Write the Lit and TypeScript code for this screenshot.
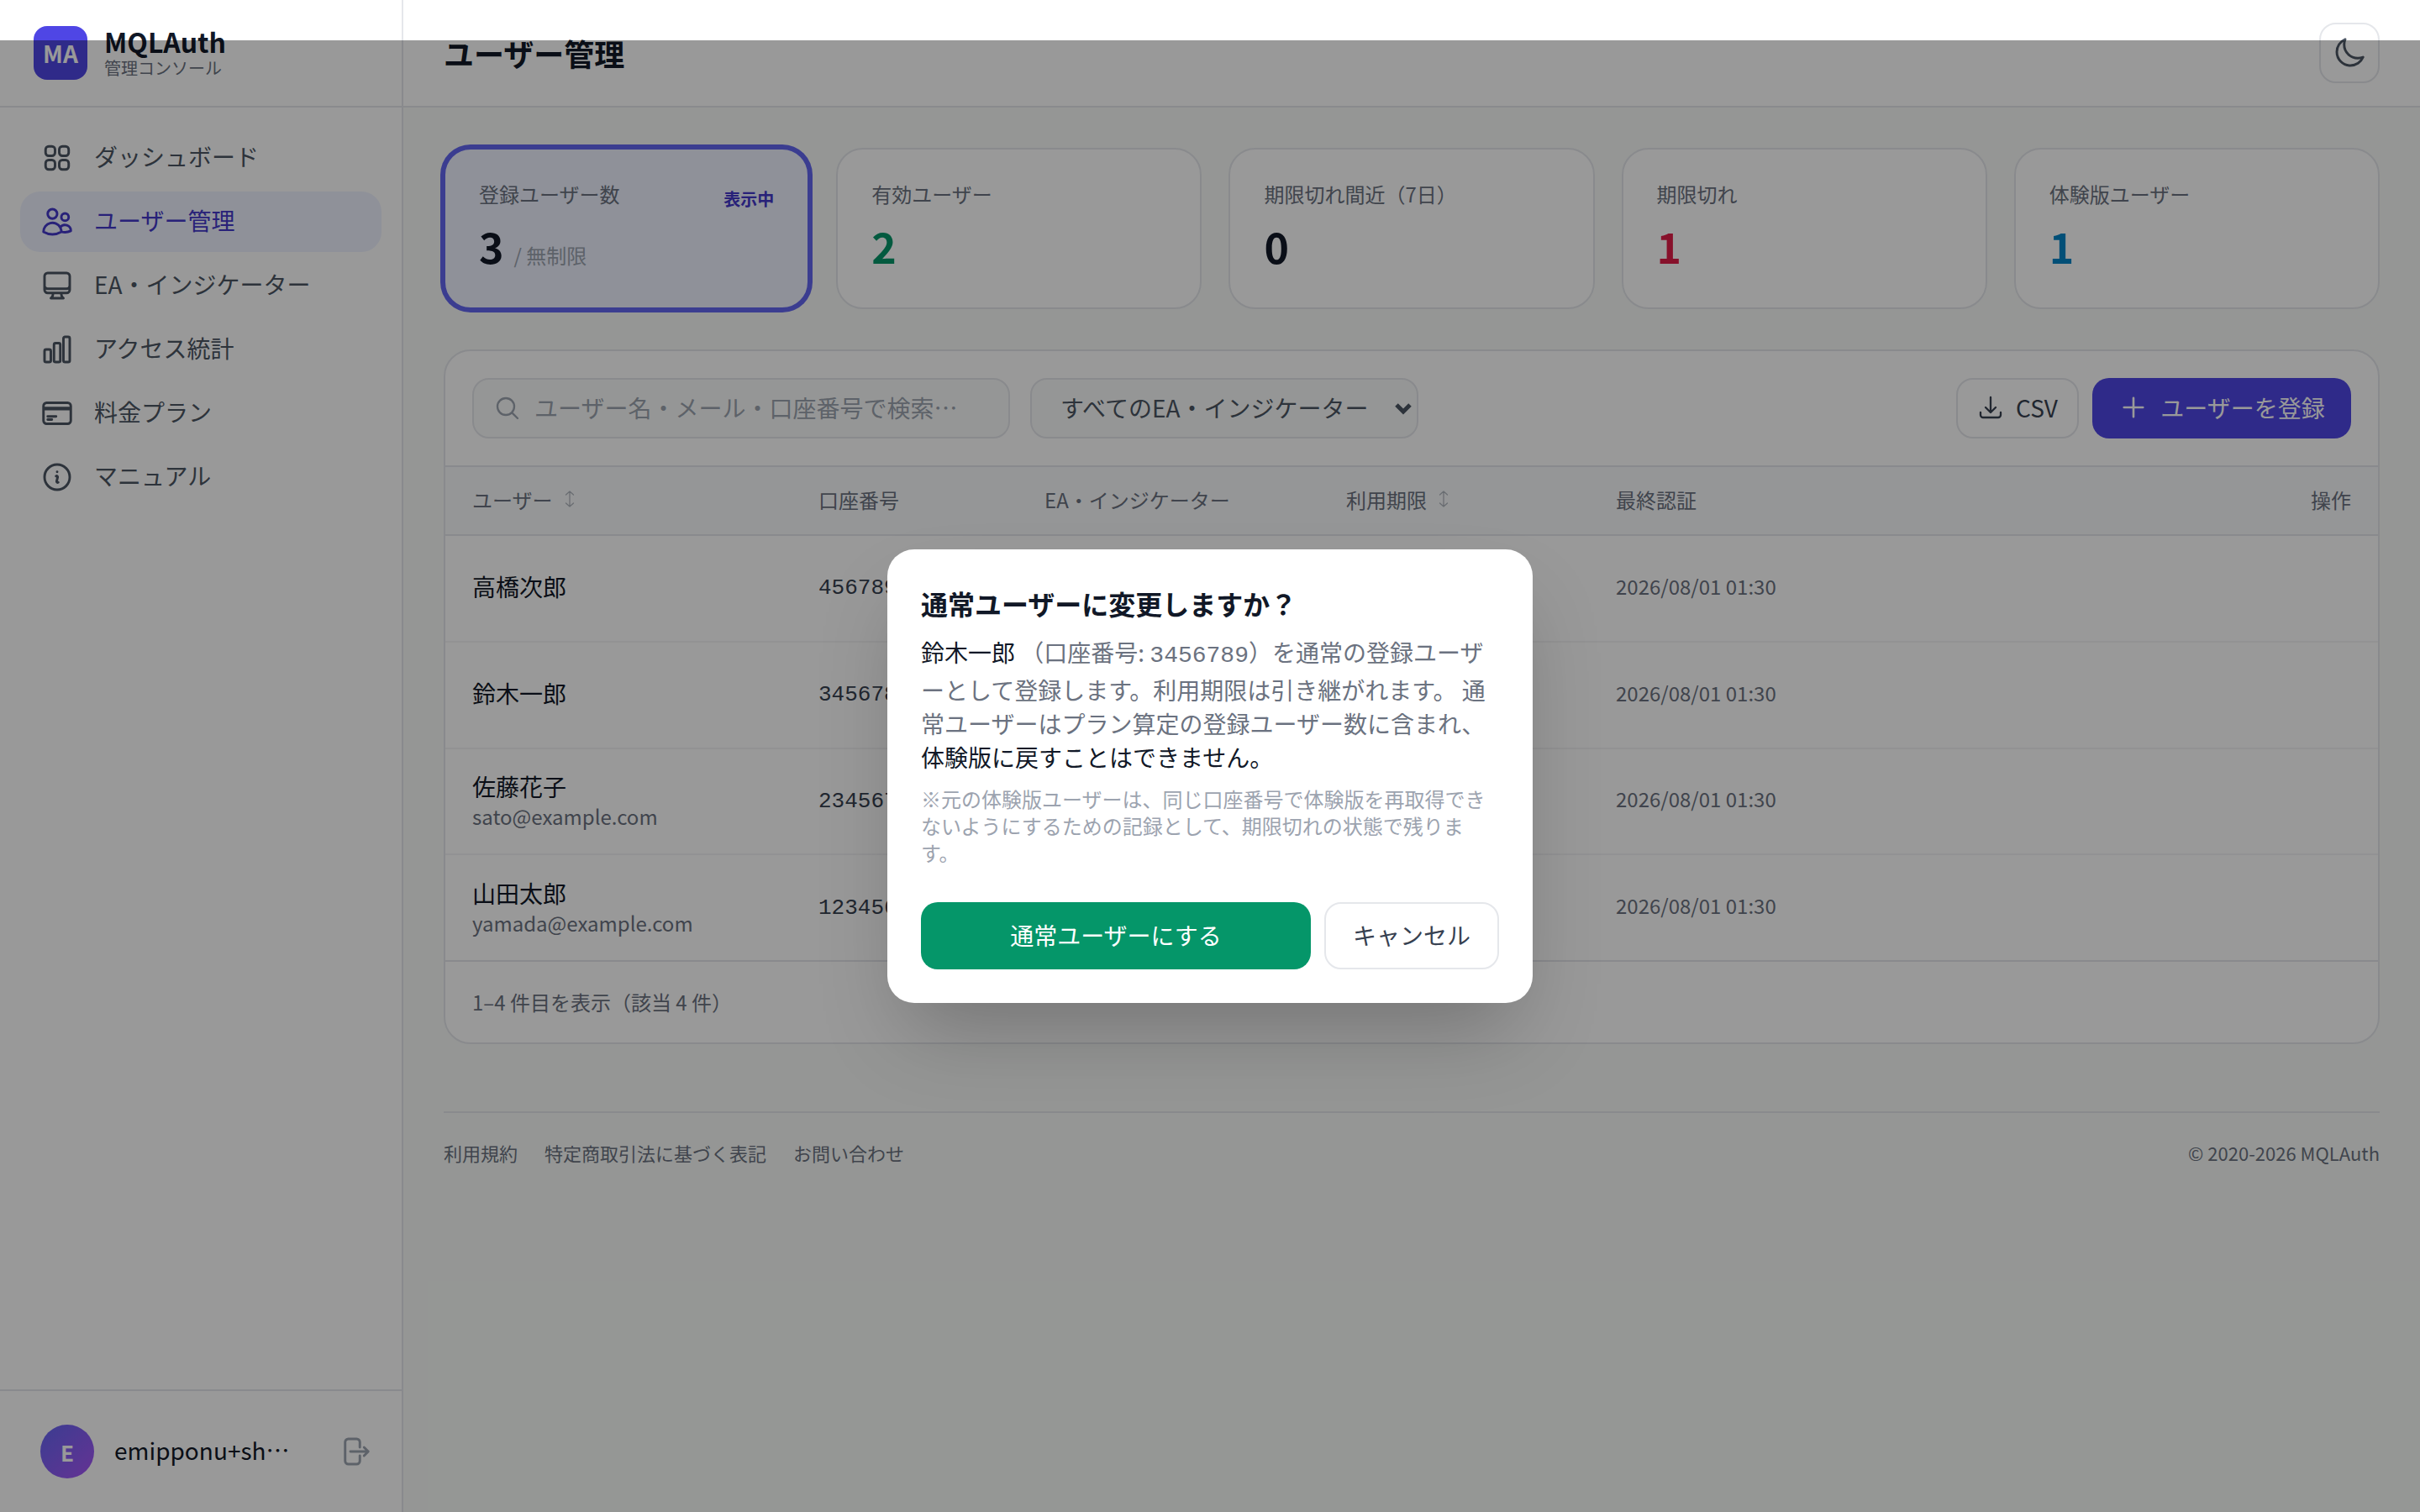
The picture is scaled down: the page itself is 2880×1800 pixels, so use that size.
import { LitElement, css, html, svg } from "lit";
import { customElement } from "lit/decorators.js";

const ICONS: Record<string, string> = {
  grid: "M3.75 6A2.25 2.25 0 0 1 6 3.75h2.25A2.25 2.25 0 0 1 10.5 6v2.25a2.25 2.25 0 0 1-2.25 2.25H6a2.25 2.25 0 0 1-2.25-2.25V6ZM3.75 15.75A2.25 2.25 0 0 1 6 13.5h2.25a2.25 2.25 0 0 1 2.25 2.25V18a2.25 2.25 0 0 1-2.25 2.25H6A2.25 2.25 0 0 1 3.75 18v-2.25ZM13.5 6a2.25 2.25 0 0 1 2.25-2.25H18A2.25 2.25 0 0 1 20.25 6v2.25A2.25 2.25 0 0 1 18 10.5h-2.25a2.25 2.25 0 0 1-2.25-2.25V6ZM13.5 15.75a2.25 2.25 0 0 1 2.25-2.25H18a2.25 2.25 0 0 1 2.25 2.25V18A2.25 2.25 0 0 1 18 20.25h-2.25A2.25 2.25 0 0 1 13.5 18v-2.25Z",
  users: "M15 19.128a9.38 9.38 0 0 0 2.625.372 9.337 9.337 0 0 0 4.121-.952 4.125 4.125 0 0 0-7.533-2.493M15 19.128v-.003c0-1.113-.285-2.16-.786-3.07M15 19.128v.106A12.318 12.318 0 0 1 8.624 21c-2.331 0-4.512-.645-6.374-1.766l-.001-.109a6.375 6.375 0 0 1 11.964-3.07M12 6.375a3.375 3.375 0 1 1-6.75 0 3.375 3.375 0 0 1 6.75 0Zm8.25 2.25a2.625 2.625 0 1 1-5.25 0 2.625 2.625 0 0 1 5.25 0Z",
  desktop: "M9 17.25v1.007a3 3 0 0 1-.879 2.122L7.5 21h9l-.621-.621A3 3 0 0 1 15 18.257V17.25m6-12V15a2.25 2.25 0 0 1-2.25 2.25H5.25A2.25 2.25 0 0 1 3 15V5.25m18 0A2.25 2.25 0 0 0 18.75 3H5.25A2.25 2.25 0 0 0 3 5.25m18 0V12a2.25 2.25 0 0 1-2.25 2.25H5.25A2.25 2.25 0 0 1 3 12V5.25",
  chart: "M3 13.125C3 12.504 3.504 12 4.125 12h2.25c.621 0 1.125.504 1.125 1.125v6.75C7.5 20.496 6.996 21 6.375 21h-2.25A1.125 1.125 0 0 1 3 19.875v-6.75ZM9.75 8.625c0-.621.504-1.125 1.125-1.125h2.25c.621 0 1.125.504 1.125 1.125v11.25c0 .621-.504 1.125-1.125 1.125h-2.25a1.125 1.125 0 0 1-1.125-1.125V8.625ZM16.5 4.125c0-.621.504-1.125 1.125-1.125h2.25C20.496 3 21 3.504 21 4.125v15.75c0 .621-.504 1.125-1.125 1.125h-2.25a1.125 1.125 0 0 1-1.125-1.125V4.125Z",
  card: "M2.25 8.25h19.5M2.25 9h19.5M5.25 14.25h6M5.25 16.5h3M4.5 19.5h15a2.25 2.25 0 0 0 2.25-2.25V6.75A2.25 2.25 0 0 0 19.5 4.5h-15a2.25 2.25 0 0 0-2.25 2.25v10.5A2.25 2.25 0 0 0 4.5 19.5Z",
  info: "m11.25 11.25.041-.02a.75.75 0 0 1 1.063.852l-.708 2.836a.75.75 0 0 0 1.063.853l.041-.021M21 12a9 9 0 1 1-18 0 9 9 0 0 1 18 0Zm-9-3.75h.008v.008H12V8.25Z",
  moon: "M21.752 15.002A9.72 9.72 0 0 1 18 15.75c-5.385 0-9.75-4.365-9.75-9.75 0-1.33.266-2.597.748-3.752A9.753 9.753 0 0 0 3 11.25C3 16.635 7.365 21 12.75 21a9.753 9.753 0 0 0 9.002-5.998Z",
  logout: "M15.75 9V5.25A2.25 2.25 0 0 0 13.5 3h-6a2.25 2.25 0 0 0-2.25 2.25v13.5A2.25 2.25 0 0 0 7.5 21h6a2.25 2.25 0 0 0 2.25-2.25V15m3 0 3-3m0 0-3-3m3 3H9",
  search: "m21 21-5.197-5.197m0 0A7.5 7.5 0 1 0 5.196 5.196a7.5 7.5 0 0 0 10.607 10.607Z",
  download: "M3 16.5v2.25A2.25 2.25 0 0 0 5.25 21h13.5A2.25 2.25 0 0 0 21 18.75V16.5M16.5 12 12 16.5m0 0L7.5 12m4.5 4.5V3",
  plus: "M12 4.5v15m7.5-7.5h-15",
  sort: "M7.5 7 12 3l4.5 4M12 3v18M7.5 17l4.5 4 4.5-4",
};

function icon(name: string, cls = "") {
  return html`<svg class="icon ${cls}" viewBox="0 0 24 24" fill="none" stroke="currentColor">
    ${svg`<path d=${ICONS[name]} stroke-linecap="round" stroke-linejoin="round"></path>`}
  </svg>`;
}

const NAV = [
  { icon: "grid", label: "ダッシュボード" },
  { icon: "users", label: "ユーザー管理", active: true },
  { icon: "desktop", label: "EA・インジケーター" },
  { icon: "chart", label: "アクセス統計" },
  { icon: "card", label: "料金プラン" },
  { icon: "info", label: "マニュアル" },
];

const STATS = [
  { label: "有効ユーザー", value: "2", tone: "green" },
  { label: "期限切れ間近（7日）", value: "0", tone: "" },
  { label: "期限切れ", value: "1", tone: "red" },
  { label: "体験版ユーザー", value: "1", tone: "blue" },
];

const USERS = [
  { name: "高橋次郎", email: "", account: "4567890" },
  { name: "鈴木一郎", email: "", account: "3456789" },
  { name: "佐藤花子", email: "sato@example.com", account: "2345678" },
  { name: "山田太郎", email: "yamada@example.com", account: "1234567" },
];

@customElement("app-root")
export class AppRoot extends LitElement {
  static styles = css`
    :host {
      display: flex;
      width: 2880px;
      height: 1800px;
      overflow: hidden;
      position: relative;
      background: #f8fbf9;
      color: #111827;
      font-family: "Noto Sans CJK JP", "Noto Sans", sans-serif;
      font-size: 28px;
    }
    * {
      box-sizing: border-box;
    }
    .icon {
      width: 40px;
      height: 40px;
      flex: none;
      stroke-width: 1.75;
    }

    /* --- Sidebar --- */
    .sidebar {
      width: 480px;
      flex: none;
      display: flex;
      flex-direction: column;
      background: #fff;
      border-right: 2px solid #e5e7eb;
    }
    .brand {
      height: 128px;
      flex: none;
      display: flex;
      align-items: center;
      gap: 20px;
      padding: 0 40px;
      border-bottom: 2px solid #e5e7eb;
    }
    .logo {
      width: 64px;
      height: 64px;
      border-radius: 16px;
      background: #4f46e5;
      color: #fff;
      font-weight: 700;
      font-size: 28px;
      display: flex;
      align-items: center;
      justify-content: center;
    }
    .brand-text {
      display: flex;
      flex-direction: column;
    }
    .brand-name {
      font-size: 32px;
      font-weight: 700;
      line-height: 32px;
    }
    .brand-sub {
      margin-top: 4px;
      font-size: 20px;
      line-height: 24px;
      color: #6b7280;
    }
    nav {
      flex: 1;
      display: flex;
      flex-direction: column;
      gap: 4px;
      padding: 24px;
    }
    .nav-item {
      height: 72px;
      display: flex;
      align-items: center;
      gap: 24px;
      padding: 0 24px;
      border-radius: 24px;
      color: #4b5563;
    }
    .nav-item span {
      padding-bottom: 4px;
    }
    .nav-item.active {
      background: #eef2ff;
      color: #4338ca;
    }
    .account {
      height: 146px;
      flex: none;
      display: flex;
      align-items: center;
      gap: 24px;
      padding: 0 36px 0 48px;
      border-top: 2px solid #e5e7eb;
    }
    .avatar {
      width: 64px;
      height: 64px;
      flex: none;
      border-radius: 50%;
      background: linear-gradient(135deg, #6366f1, #a855f7);
      color: #fff;
      font-weight: 700;
      font-size: 26px;
      display: flex;
      align-items: center;
      justify-content: center;
    }
    .account-name {
      width: 222px;
      padding-bottom: 4px;
      overflow: hidden;
      white-space: nowrap;
      text-overflow: ellipsis;
    }
    .logout {
      margin-left: auto;
      color: #9ca3af;
    }

    /* --- Main column --- */
    .main {
      flex: 1;
      min-width: 0;
      display: flex;
      flex-direction: column;
    }
    .topbar {
      height: 128px;
      flex: none;
      display: flex;
      align-items: center;
      justify-content: space-between;
      padding: 0 48px;
      border-bottom: 2px solid #e5e7eb;
      background: #fff;
    }
    h1 {
      margin: 0;
      font-size: 36px;
      font-weight: 700;
    }
    .theme {
      width: 72px;
      height: 72px;
      border: 2px solid #e5e7eb;
      border-radius: 20px;
      background: #fff;
      color: #4b5563;
      display: flex;
      align-items: center;
      justify-content: center;
    }
    .content {
      flex: 1;
      display: flex;
      flex-direction: column;
      padding: 48px 48px 0;
    }

    /* --- Stat cards --- */
    .stats {
      display: grid;
      grid-template-columns: repeat(5, 1fr);
      gap: 32px;
    }
    .stat {
      height: 192px;
      padding: 28px 40px;
      border: 2px solid #e5e7eb;
      border-radius: 32px;
      background: #fff;
    }
    .stat.current {
      background: #eef2ff;
      border-color: #6366f1;
      box-shadow: 0 0 0 4px #6366f1;
    }
    .stat-head {
      display: flex;
      align-items: center;
      justify-content: space-between;
      height: 48px;
      font-size: 24px;
      color: #6b7280;
    }
    .stat-flag {
      margin-top: 12px;
      font-size: 20px;
      font-weight: 700;
      color: #4338ca;
    }
    .stat-value {
      display: flex;
      align-items: baseline;
      gap: 12px;
      margin-top: 6px;
      font-size: 50px;
      font-weight: 700;
      line-height: 64px;
    }
    .stat-value small {
      font-size: 24px;
      font-weight: 400;
      color: #9ca3af;
    }
    .green {
      color: #059669;
    }
    .red {
      color: #e11d48;
    }
    .blue {
      color: #0284c7;
    }

    /* --- Users table --- */
    .panel {
      margin-top: 48px;
      height: 827px;
      display: flex;
      flex-direction: column;
      border: 2px solid #e5e7eb;
      border-radius: 32px;
      background: #fff;
      overflow: hidden;
    }
    .toolbar {
      height: 138px;
      flex: none;
      display: flex;
      align-items: center;
      gap: 24px;
      padding: 0 32px;
      border-bottom: 2px solid #e5e7eb;
    }
    .search {
      width: 640px;
      height: 72px;
      display: flex;
      align-items: center;
      gap: 16px;
      padding: 0 24px;
      border: 2px solid #e5e7eb;
      border-radius: 20px;
      background: #f9fbfa;
      color: #9ca3af;
    }
    .search .icon {
      width: 32px;
      height: 32px;
    }
    .search input {
      flex: 1;
      min-width: 0;
      border: 0;
      outline: 0;
      background: none;
      padding: 0 0 2px;
      font: inherit;
    }
    .search input::placeholder {
      color: #9ca3af;
    }
    .select-wrap {
      position: relative;
      width: 462px;
      height: 72px;
      flex: none;
    }
    select {
      appearance: none;
      width: 100%;
      height: 100%;
      padding: 0 60px 2px 34px;
      border: 2px solid #e5e7eb;
      border-radius: 20px;
      background: #f9fbfa;
      color: #4b5563;
      font: inherit;
    }
    .chevron {
      position: absolute;
      right: 8px;
      top: 29px;
      width: 20px;
      height: 15px;
      fill: none;
      stroke: #4b5563;
      stroke-width: 5;
      pointer-events: none;
    }
    .actions {
      margin-left: auto;
      display: flex;
      gap: 16px;
    }
    .btn {
      height: 72px;
      display: flex;
      align-items: center;
      justify-content: center;
      gap: 16px;
      padding-bottom: 2px;
      border-radius: 20px;
      font-size: 28px;
    }
    .btn .icon {
      width: 32px;
      height: 32px;
    }
    .btn.outline {
      width: 146px;
      gap: 14px;
      border: 2px solid #e5e7eb;
      background: #fff;
      color: #374151;
    }
    .btn.primary {
      width: 308px;
      gap: 14px;
      background: #4f46e5;
      color: #fff;
    }
    .btn.primary .icon {
      width: 36px;
      height: 36px;
    }
    .row {
      display: grid;
      grid-template-columns: 412px 269px 359px 321px 1fr auto;
      align-items: center;
      padding: 0 32px;
    }
    .row.head {
      height: 82px;
      flex: none;
      padding-bottom: 4px;
      font-size: 24px;
      color: #6b7280;
      background: #f8fafc;
      border-bottom: 2px solid #e5e7eb;
    }
    .head-cell {
      display: flex;
      align-items: center;
      gap: 8px;
    }
    .head-cell .icon {
      width: 24px;
      height: 24px;
      stroke-width: 1.25;
      color: #b0b5bd;
    }
    .row.user {
      height: 126.75px;
      flex: none;
      border-bottom: 2px solid #f3f4f6;
    }
    .row.user:nth-of-type(6) {
      border-bottom-color: #e5e7eb;
    }
    .user-cell {
      padding-bottom: 4px;
    }
    .user-name {
      line-height: 40px;
    }
    .user-mail {
      font-size: 24px;
      line-height: 32px;
      color: #6b7280;
    }
    .mono {
      font-family: "Liberation Mono", monospace;
    }
    .account-no {
      font-size: 26px;
      color: #374151;
    }
    .date {
      padding-bottom: 6px;
      font-size: 24px;
      color: #6b7280;
    }
    .panel-foot {
      flex: 1;
      display: flex;
      align-items: center;
      padding: 0 32px 2px;
      font-size: 24px;
      color: #6b7280;
    }

    /* --- Page footer --- */
    footer {
      margin-top: 80px;
      height: 96px;
      display: flex;
      align-items: center;
      justify-content: space-between;
      border-top: 2px solid #e5e7eb;
      font-size: 22px;
      color: #6b7280;
    }
    .links {
      display: flex;
      gap: 32px;
    }

    /* --- Dialog --- */
    .overlay {
      position: absolute;
      inset: 48px 0 0 0;
      display: flex;
      align-items: center;
      justify-content: center;
      background: rgba(0, 0, 0, 0.4);
    }
    .dialog {
      width: 768px;
      height: 540px;
      padding: 40px;
      border-radius: 32px;
      background: #fff;
      box-shadow: 0 50px 100px -24px rgba(0, 0, 0, 0.25);
      display: flex;
      flex-direction: column;
    }
    h2 {
      margin: 0;
      font-size: 32px;
      font-weight: 700;
      line-height: 48px;
    }
    .body {
      margin: 14px 0 0;
      line-height: 40px;
      color: #6b7280;
    }
    .body strong {
      font-weight: 400;
      color: #111827;
    }
    .note {
      margin: 14px 0 0;
      font-size: 24px;
      line-height: 32px;
      color: #9ca3af;
    }
    .dialog-actions {
      margin-top: auto;
      display: flex;
      gap: 16px;
    }
    .dialog-actions .btn {
      height: 80px;
      border-radius: 20px;
    }
    .confirm {
      flex: 1;
      background: #059669;
      color: #fff;
    }
    .cancel {
      width: 208px;
      border: 2px solid #e5e7eb;
      background: #fff;
      color: #374151;
    }
  `;

  private renderSidebar() {
    return html`
      <aside class="sidebar">
        <div class="brand">
          <div class="logo">MA</div>
          <div class="brand-text">
            <div class="brand-name">MQLAuth</div>
            <div class="brand-sub">管理コンソール</div>
          </div>
        </div>
        <nav>
          ${NAV.map(
            (n) => html`
              <div class="nav-item ${n.active ? "active" : ""}">
                ${icon(n.icon)}<span>${n.label}</span>
              </div>
            `,
          )}
        </nav>
        <div class="account">
          <div class="avatar">E</div>
          <div class="account-name">emipponu+shop@example.com</div>
          ${icon("logout", "logout")}
        </div>
      </aside>
    `;
  }

  private renderStats() {
    return html`
      <section class="stats">
        <div class="stat current">
          <div class="stat-head">
            <span>登録ユーザー数</span><span class="stat-flag">表示中</span>
          </div>
          <div class="stat-value">3 <small>/ 無制限</small></div>
        </div>
        ${STATS.map(
          (s) => html`
            <div class="stat">
              <div class="stat-head"><span>${s.label}</span></div>
              <div class="stat-value ${s.tone}">${s.value}</div>
            </div>
          `,
        )}
      </section>
    `;
  }

  private renderTable() {
    return html`
      <section class="panel">
        <div class="toolbar">
          <label class="search">
            ${icon("search")}
            <input placeholder="ユーザー名・メール・口座番号で検索…" />
          </label>
          <div class="select-wrap">
            <select><option>すべてのEA・インジケーター</option></select>
            <svg class="chevron" viewBox="0 0 20 15">
              <path d="M2 3l8 8 8-8"></path>
            </svg>
          </div>
          <div class="actions">
            <div class="btn outline">${icon("download")}CSV</div>
            <div class="btn primary">${icon("plus")}ユーザーを登録</div>
          </div>
        </div>
        <div class="row head">
          <div class="head-cell">ユーザー${icon("sort")}</div>
          <div>口座番号</div>
          <div>EA・インジケーター</div>
          <div class="head-cell">利用期限${icon("sort")}</div>
          <div>最終認証</div>
          <div>操作</div>
        </div>
        ${USERS.map(
          (u) => html`
            <div class="row user">
              <div class="user-cell">
                <div class="user-name">${u.name}</div>
                ${u.email ? html`<div class="user-mail">${u.email}</div>` : null}
              </div>
              <div class="mono account-no">${u.account}</div>
              <div></div>
              <div></div>
              <div class="date">2026/08/01 01:30</div>
              <div></div>
            </div>
          `,
        )}
        <div class="panel-foot">1–4 件目を表示（該当 4 件）</div>
      </section>
    `;
  }

  render() {
    return html`
      ${this.renderSidebar()}
      <div class="main">
        <header class="topbar">
          <h1>ユーザー管理</h1>
          <div class="theme">${icon("moon")}</div>
        </header>
        <div class="content">
          ${this.renderStats()} ${this.renderTable()}
          <footer>
            <div class="links">
              <span>利用規約</span><span>特定商取引法に基づく表記</span><span>お問い合わせ</span>
            </div>
            <span>© 2020-2026 MQLAuth</span>
          </footer>
        </div>
      </div>
      <div class="overlay">
        <div class="dialog">
          <h2>通常ユーザーに変更しますか？</h2>
          <p class="body">
            <strong>鈴木一郎</strong> （口座番号: <span class="mono">3456789</span>）を通常の登録ユーザーとして登録します。利用期限は引き継がれます。
            通常ユーザーはプラン算定の登録ユーザー数に含まれ、<strong>体験版に戻すことはできません。</strong>
          </p>
          <p class="note">
            ※元の体験版ユーザーは、同じ口座番号で体験版を再取得できないようにするための記録として、期限切れの状態で残ります。
          </p>
          <div class="dialog-actions">
            <div class="btn confirm">通常ユーザーにする</div>
            <div class="btn cancel">キャンセル</div>
          </div>
        </div>
      </div>
    `;
  }
}
